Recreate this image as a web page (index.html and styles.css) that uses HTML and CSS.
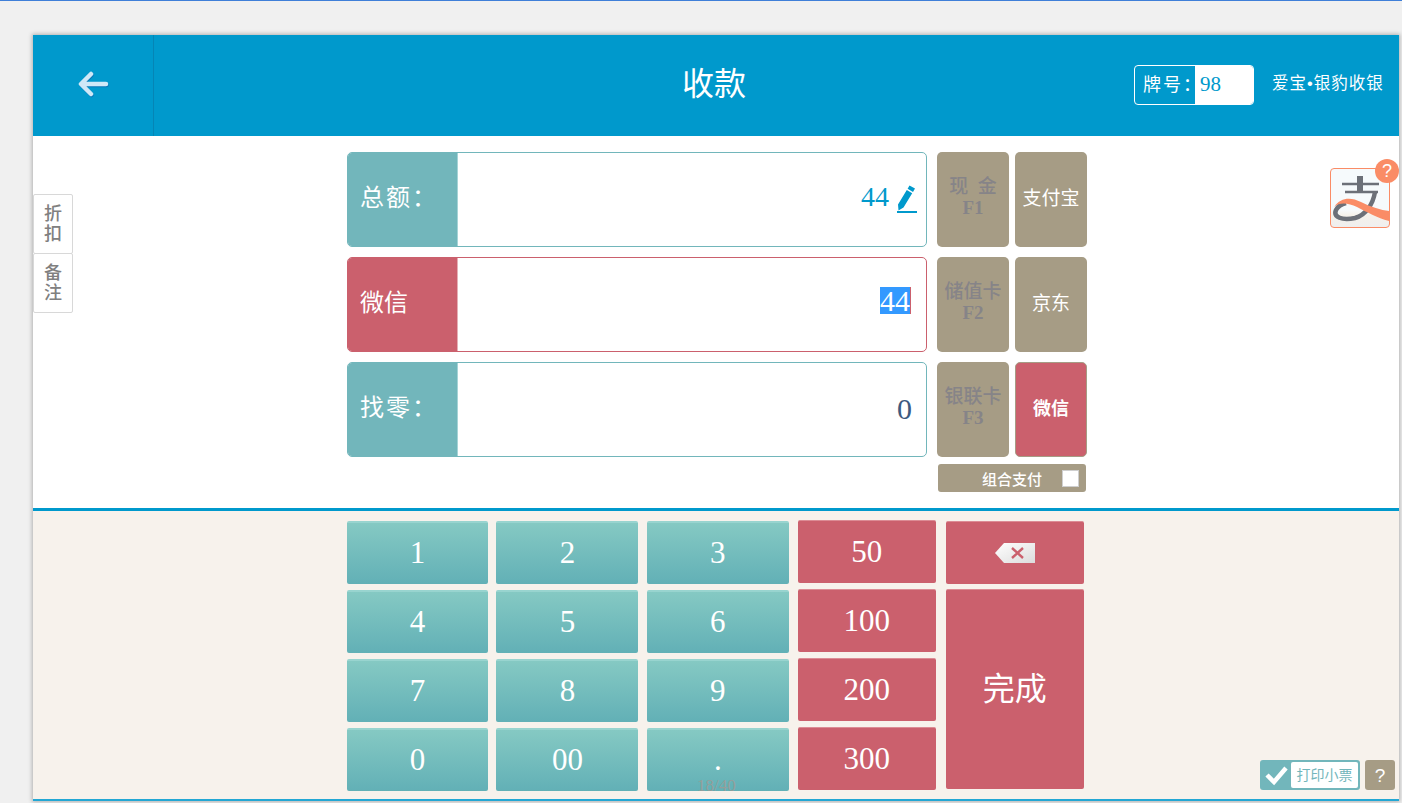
FILE: index.html
```html
<!DOCTYPE html>
<html lang="en">
<head>
    <meta charset="UTF-8">
    <meta name="viewport" content="width=device-width, initial-scale=1.0">
    <title>收款</title>
    <link rel="stylesheet" href="styles.css">
</head>
<body>
    <div class="window">
        <header class="top-bar">
            <div class="back-btn">
                <svg width="32" height="28" viewBox="0 0 32 28">
                    <path d="M14 3 L4 13 L14 23 M5 13 H29" fill="none" stroke="#0a78b8" stroke-width="4.5" stroke-linecap="round" stroke-linejoin="round" transform="translate(0.6 1)"/>
                    <path d="M14 3 L4 13 L14 23 M5 13 H29" fill="none" stroke="#cfe8f7" stroke-width="4.5" stroke-linecap="round" stroke-linejoin="round"/>
                </svg>
            </div>
            <h1 class="page-title">收款</h1>
            <div class="top-right">
                <div class="ticket-no">
                    <span class="ticket-label">牌号：</span>
                    <span class="ticket-value">98</span>
                </div>
                <span class="brand">爱宝<span class="brand-dot">•</span>银豹收银</span>
            </div>
        </header>

        <section class="pay-area">
            <div class="side-tabs">
                <div class="side-tab">折<br>扣</div>
                <div class="side-tab">备<br>注</div>
            </div>

            <div class="amount-rows">
                <div class="amount-row">
                    <div class="amount-label">总额：</div>
                    <div class="amount-value blue">44
                        <svg class="pencil" width="22" height="30" viewBox="0 0 22 30">
                            <path d="M14.5 1.5 L20 4.5 L18 8 L12.6 4.8 Z M11.8 6 L17.2 9.2 L8.5 23.5 L3.5 26.5 L3 20.5 Z" fill="#0099cc"/>
                            <rect x="2" y="27" width="20" height="2" fill="#0099cc"/>
                        </svg>
                    </div>
                </div>
                <div class="amount-row active">
                    <div class="amount-label">微信</div>
                    <div class="amount-value"><span class="selected">44</span></div>
                </div>
                <div class="amount-row">
                    <div class="amount-label">找零：</div>
                    <div class="amount-value dark">0</div>
                </div>
            </div>

            <div class="pay-types">
                <div class="pay-btn off">现&nbsp;&nbsp;金<br><span class="fkey">F1</span></div>
                <div class="pay-btn">支付宝</div>
                <div class="pay-btn off">储值卡<br><span class="fkey">F2</span></div>
                <div class="pay-btn">京东</div>
                <div class="pay-btn off">银联卡<br><span class="fkey">F3</span></div>
                <div class="pay-btn current">微信</div>
                <div class="combo-pay">
                    <span>组合支付</span>
                    <span class="combo-check"></span>
                </div>
            </div>

            <div class="alipay-icon">
                <svg width="58" height="58" viewBox="0 0 58 58">
                    <path d="M11 15 H48 M14 23 H47" stroke="#6c7078" stroke-width="2.4" fill="none"/>
                    <path d="M26 7 H32 V23 H26 Z" fill="#6c7078"/>
                    <path d="M44 23 C42 35 35 46 24 49 C11 52 2 48 5 41 C7 37 11 35 15 34" fill="none" stroke="#6c7078" stroke-width="4.5"/>
                    <path d="M3 38 C10 28 20 28 30 33 C40 38 50 41 58 42 V52 C46 49 36 43 26 38 C17 34 9 33 3 38 Z" fill="#fa8c66"/>
                </svg>
                <span class="help-badge">?</span>
            </div>
        </section>

        <section class="keypad">
            <div class="digit-keys">
                <div class="key teal">1</div>
                <div class="key teal">2</div>
                <div class="key teal">3</div>
                <div class="key teal">4</div>
                <div class="key teal">5</div>
                <div class="key teal">6</div>
                <div class="key teal">7</div>
                <div class="key teal">8</div>
                <div class="key teal">9</div>
                <div class="key teal">0</div>
                <div class="key teal">00</div>
                <div class="key teal">.</div>
            </div>
            <div class="money-keys">
                <div class="key red">50</div>
                <div class="key red">100</div>
                <div class="key red">200</div>
                <div class="key red">300</div>
            </div>
            <div class="action-keys">
                <div class="key red backspace">
                    <svg width="40" height="20" viewBox="0 0 40 20">
                        <defs>
                            <linearGradient id="bs" x1="0" y1="0" x2="1" y2="1">
                                <stop offset="0" stop-color="#ffffff"/>
                                <stop offset="1" stop-color="#dcdcdc"/>
                            </linearGradient>
                        </defs>
                        <path d="M0 10 L9 0 H40 V20 H9 Z" fill="url(#bs)"/>
                        <path d="M17 5 L28 15 M28 5 L17 15" stroke="#cb606d" stroke-width="2.4"/>
                    </svg>
                </div>
                <div class="key red finish">完成</div>
            </div>

            <span class="page-count">18/40</span>

            <div class="print-tools">
                <div class="print-toggle">
                    <svg width="30" height="28" viewBox="0 0 30 28">
                        <path d="M6 14 L13 21 L25 7" fill="none" stroke="#fff" stroke-width="4.5"/>
                    </svg>
                    <span class="print-text">打印小票</span>
                </div>
                <div class="print-help">?</div>
            </div>
        </section>
    </div>
</body>
</html>
```

FILE: styles.css
```css
* {
    box-sizing: border-box;
}
html, body {
    height: 100%;
}
body {
    margin: 0;
    padding: 34px 0 0 33px;
    overflow: hidden;
    background: #f0f0f0;
    border-top: 1px solid #3f7fd8;
    font-family: "Liberation Serif", "Noto Sans CJK SC", serif;
}

.window {
    position: relative;
    width: 1366px;
    background: #fff;
    box-shadow: 0 0 4px 1px #b0b0b0;
}

/* header */
.top-bar {
    display: grid;
    grid-template-columns: 121px 1fr 265px;
    height: 101px;
    background: #0099cc;
    color: #fff;
}
.back-btn {
    display: flex;
    align-items: center;
    justify-content: center;
    padding-right: 1px;
    padding-bottom: 2px;
    border-right: 1px solid #0585b5;
}
.page-title {
    margin: 0;
    padding-left: 140px;
    font-size: 32px;
    font-weight: normal;
    line-height: 98px;
    text-align: center;
}
.top-right {
    display: flex;
    align-items: center;
    padding-bottom: 1px;
}
.ticket-no {
    display: flex;
    width: 120px;
    height: 40px;
    border: 1px solid #fff;
    border-radius: 4px;
    overflow: hidden;
}
.ticket-label {
    width: 60px;
    padding-left: 8px;
    font-size: 18px;
    letter-spacing: 2px;
    line-height: 38px;
    white-space: nowrap;
}
.ticket-value {
    flex: 1;
    padding-left: 5px;
    background: #fff;
    color: #0099cc;
    font-size: 21px;
    line-height: 36px;
}
.brand {
    margin-left: 18px;
    margin-top: -7px;
    font-family: "Noto Sans CJK SC", sans-serif;
    font-size: 16.5px;
    letter-spacing: 1px;
    white-space: nowrap;
}
.brand-dot {
    font-family: "Liberation Sans", sans-serif;
}

/* payment area */
.pay-area {
    position: relative;
    display: flex;
    height: 375px;
    padding: 16px 0 0 314px;
    border-bottom: 3px solid #0099cc;
}
.side-tabs {
    position: absolute;
    left: 0;
    top: 58px;
    width: 40px;
}
.side-tab {
    height: 60px;
    margin-bottom: -1px;
    padding-top: 9px;
    border: 1px solid #d8d8d8;
    border-radius: 2px;
    background: #fff;
    color: #808080;
    font-size: 18px;
    font-weight: 500;
    line-height: 20px;
    text-align: center;
}
.amount-rows {
    display: flex;
    flex-direction: column;
    gap: 10px;
    width: 580px;
}
.amount-row {
    display: flex;
    height: 95px;
    border: 1px solid #72b6bb;
    border-radius: 5px;
    overflow: hidden;
}
.amount-row.active {
    border-color: #cb606d;
}
.amount-label {
    width: 110px;
    padding: 27px 0 0 12px;
    border-right: 1px solid #a5d3d6;
    background: #72b6bb;
    color: #fff;
    font-size: 24px;
    letter-spacing: 2px;
    line-height: 36px;
    white-space: nowrap;
}
.active .amount-label {
    border-right-color: #e5b0b6;
    background: #cb606d;
    letter-spacing: 0;
}
.amount-value {
    display: flex;
    flex: 1;
    align-items: center;
    justify-content: flex-end;
    gap: 6px;
    padding: 0 15px 8px 0;
    font-size: 30px;
}
.amount-value.blue {
    padding-right: 9px;
    padding-bottom: 6px;
    color: #0099cc;
    font-size: 28px;
}
.amount-value.dark {
    padding-right: 14px;
    padding-bottom: 2px;
    color: #3d5a80;
}
.pencil {
    margin-top: 4px;
}
.selected {
    border-right: 1px solid #cb606d;
    background: #3399ff;
    color: #fff;
    line-height: 27px;
}
.pay-types {
    display: grid;
    grid-template-columns: 72px 72px;
    grid-auto-rows: 95px;
    column-gap: 6px;
    row-gap: 10px;
    margin-left: 10px;
}
.pay-btn {
    display: flex;
    flex-direction: column;
    align-items: center;
    justify-content: center;
    padding-bottom: 2px;
    border-radius: 5px;
    background: #a69c85;
    color: #fff;
    font-size: 19px;
    line-height: 22px;
    text-align: center;
    white-space: nowrap;
}
.pay-btn.off {
    display: block;
    padding-top: 24px;
    color: #868488;
    font-weight: 500;
    line-height: 21px;
}
.fkey {
    font-weight: bold;
}
.pay-btn.current {
    border: 1px solid #a69c85;
    background: #cb606d;
    font-size: 18px;
    font-weight: bold;
}
.combo-pay {
    display: flex;
    grid-column: 1 / 3;
    align-items: center;
    justify-content: flex-end;
    height: 28px;
    margin: -3px 1px 0;
    padding-right: 7px;
    border-radius: 3px;
    background: #a69c85;
    color: #fff;
    font-family: "Noto Sans CJK SC", sans-serif;
    font-size: 15px;
    font-weight: 500;
}
.combo-check {
    width: 17px;
    height: 17px;
    margin-left: 20px;
    border: 1px solid #cfcfcf;
    background: #fff;
}
.alipay-icon {
    position: absolute;
    left: 1297px;
    top: 32px;
    width: 60px;
    height: 60px;
    border: 1px solid #fa8c66;
    border-radius: 4px;
    background: linear-gradient(#f6fafc 70%, #f5f1ea 80%, #efefef);
}
.help-badge {
    position: absolute;
    top: -10px;
    right: -10px;
    width: 24px;
    height: 24px;
    border-radius: 50%;
    background: #fa8c66;
    color: #fff;
    font-family: "Liberation Sans", sans-serif;
    font-size: 18px;
    line-height: 24px;
    text-align: center;
}

/* keypad */
.keypad {
    position: relative;
    display: flex;
    align-items: flex-start;
    height: 290px;
    padding-left: 314px;
    border-bottom: 2px solid #22a7d4;
    background: #f7f2ec;
}
.digit-keys {
    display: grid;
    grid-template-columns: 141px 142px 142px;
    grid-auto-rows: 63px;
    column-gap: 8.4px;
    row-gap: 6px;
    margin-top: 10px;
}
.money-keys {
    display: grid;
    grid-template-columns: 138px;
    grid-auto-rows: 63px;
    row-gap: 6px;
    margin: 9px 0 0 9px;
}
.action-keys {
    display: flex;
    flex-direction: column;
    gap: 5px;
    width: 138px;
    margin: 10px 0 0 10px;
}
.key {
    display: flex;
    align-items: center;
    justify-content: center;
    border-radius: 2px;
    color: #fff;
    font-size: 31px;
}
.key.teal {
    padding-bottom: 2px;
    border-top: 2px solid #98d4cf;
    background: linear-gradient(#85c9c3, #62b0b6);
}
.key.red {
    border-top: 1px solid #dc8c95;
    background: #cb606d;
}
.backspace {
    height: 63px;
}
.key.finish {
    height: 200px;
    padding-bottom: 8px;
    font-size: 32px;
}
.page-count {
    position: absolute;
    left: 664px;
    top: 265px;
    color: #a09a94;
    font-size: 17px;
    opacity: 0.8;
}
.print-tools {
    position: absolute;
    right: 4px;
    top: 249px;
    display: flex;
    gap: 5px;
}
.print-toggle {
    display: flex;
    align-items: center;
    width: 100px;
    height: 30px;
    padding: 2px;
    border-radius: 3px;
    background: #72b6bb;
}
.print-toggle svg {
    flex: none;
    margin-left: -1px;
}
.print-text {
    flex: 1;
    height: 26px;
    border-radius: 2px;
    background: #fff;
    color: #72b6bb;
    font-family: "Noto Sans CJK SC", sans-serif;
    font-size: 14px;
    line-height: 25px;
    text-align: center;
}
.print-help {
    width: 30px;
    height: 30px;
    border-radius: 3px;
    background: #a69c85;
    color: #fff;
    font-family: "Liberation Sans", sans-serif;
    font-size: 19px;
    line-height: 31px;
    text-align: center;
}
```
